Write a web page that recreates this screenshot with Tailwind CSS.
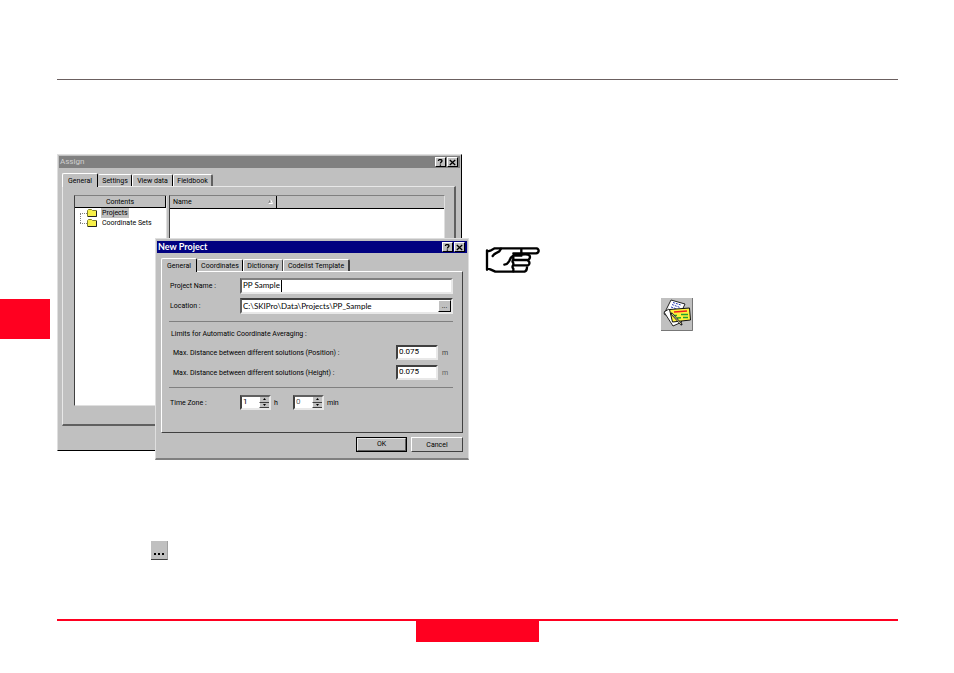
<!DOCTYPE html>
<html lang="en">
<head>
    <meta charset="UTF-8">
    <meta name="viewport" content="width=device-width, initial-scale=1.0">
    <title>New Project</title>
    <script src="https://cdn.jsdelivr.net/npm/@tailwindcss/browser@4"></script>
</head>
<body class="bg-white text-black font-['Roboto','Liberation_Sans',sans-serif] text-[7px] leading-[10px]">
    <div class="flex flex-col min-h-screen">
        <header class="h-20 ml-[57px] mr-14 border-b border-[#6b6060]"></header>

        <main class="flex flex-1 items-start">
            <!-- Chapter tab -->
            <div class="w-[50px] h-10 mt-[219px] mr-[7px] bg-[#ff0020] shrink-0"></div>

            <!-- Left column -->
            <div class="w-[412px] shrink-0 pt-[74px]">
                <div class="relative h-[306px]">

                    <!-- Assign window -->
                    <section class="w-[405px] h-[297px] flex flex-col bg-[#c0c0c0] border border-t-[#dfdfdf] border-l-[#dfdfdf] border-r-black border-b-black p-px">
                        <div class="flex items-center h-3 pl-px pr-0.5 bg-[#808080] text-[#d0d0d0]">
                            <h2 class="flex-1 text-[8px]">Assign</h2>
                            <button aria-label="Help" class="w-[11px] h-[10px] flex items-center justify-center bg-[#c0c0c0] border border-t-white border-l-white border-r-black border-b-black">
                                <svg class="w-[7px] h-[7px]" viewBox="0 0 7 7" fill="none" stroke="#000"><path d="M1.5 2V1.5C1.5 .2 5 .2 5 1.7 5 3 3.4 3 3.4 4.6M3.4 5.6V6.8" stroke-width="1.3"/></svg>
                            </button>
                            <button aria-label="Close" class="w-[11px] h-[10px] ml-px flex items-center justify-center bg-[#c0c0c0] border border-t-white border-l-white border-r-black border-b-black">
                                <svg class="w-[7px] h-[7px]" viewBox="0 0 7 7" fill="none" stroke="#000"><path d="M.8 1l5.4 5M6.2 1L.8 6" stroke-width="1.3"/></svg>
                            </button>
                        </div>

                        <div class="flex items-end h-[18px] pl-[3px] whitespace-nowrap">
                            <button class="relative h-[14px] w-9 -mb-px bg-[#c0c0c0] border border-b-0 border-t-white border-l-white border-r-black rounded-t-xs z-10">General</button>
                            <button class="h-3 w-[34px] border border-b-0 border-t-white border-l-[#c0c0c0] border-r-black rounded-t-xs">Settings</button>
                            <button class="h-3 w-[41px] border border-b-0 border-t-white border-l-white border-r-black rounded-t-xs">View data</button>
                            <button class="h-3 w-10 border border-b-0 border-t-white border-l-white border-r-2 border-r-[#606060] rounded-t-xs">Fieldbook</button>
                        </div>

                        <div class="flex gap-0.5 h-[240px] ml-[3px] mr-1 pl-[11px] pr-[9px] pt-2 pb-[18px] border border-t-[#e8e8e8] border-l-[#e8e8e8] border-r-2 border-r-[#606060] border-b-2 border-b-[#606060]">
                            <div class="w-[93px] bg-white border border-t-[#808080] border-l-[#404040] border-r-[#dfdfdf] border-b-[#dfdfdf]">
                                <div class="h-3 bg-[#c0c0c0] border-b border-r border-black text-center leading-[12px]">Contents</div>
                                <ul class="relative">
                                    <li class="flex items-center h-[10px] ml-[5px]">
                                        <span class="w-[7px] h-px border-t border-dotted border-[#808080]"></span>
                                        <svg class="w-[10px] h-2" viewBox="0 0 10 8"><path d="M.5 7.5v-6l1-1h3l1 1h4v6z" fill="#f7f04a" stroke="#80802a"/><path d="M1 7.5h8.500V2" fill="none" stroke="#222"/></svg>
                                        <span class="ml-1 px-px bg-[#c0c0c0]">Projects</span>
                                    </li>
                                    <li class="flex items-center h-[10px] ml-[5px]">
                                        <span class="w-[7px] h-px border-t border-dotted border-[#808080]"></span>
                                        <svg class="w-[10px] h-2" viewBox="0 0 10 8"><path d="M.5 7.5v-6l1-1h3l1 1h4v6z" fill="#f7f04a" stroke="#80802a"/><path d="M1 7.5h8.500V2" fill="none" stroke="#222"/></svg>
                                        <span class="ml-1 px-px">Coordinate Sets</span>
                                    </li>
                                    <li class="absolute left-[5px] top-[5px] h-[10px] border-l border-dotted border-[#808080]" aria-hidden="true"></li>
                                </ul>
                            </div>
                            <div class="flex-1 bg-white border border-t-[#808080] border-l-[#404040] border-r-[#dfdfdf] border-b-[#dfdfdf]">
                                <table class="w-full border-collapse">
                                    <thead>
                                        <tr class="h-3 bg-[#c0c0c0]">
                                            <th class="w-[106px] p-0 pl-[3px] pr-[3px] font-normal text-left border-r border-b border-black">
                                                <span class="flex items-center justify-between h-[10px]">Name
                                                    <svg class="w-[5px] h-[5px]" viewBox="0 0 5 5" fill="none"><path d="M.5 4.5l2-4" stroke="#808080"/><path d="M2.5.5l2 4h-4" stroke="#fff"/></svg>
                                                </span>
                                            </th>
                                            <th class="p-0 border-b border-black"></th>
                                        </tr>
                                    </thead>
                                </table>
                            </div>
                        </div>
                    </section>

                    <!-- New Project dialog -->
                    <section role="dialog" aria-labelledby="dialogTitle" class="absolute left-[98px] top-[84px] w-[314px] h-[222px] flex flex-col bg-[#c0c0c0] border border-t-[#dfdfdf] border-l-[#dfdfdf] border-r-[#dfdfdf] border-b-2 border-b-[#808080] px-px pt-0.5">
                        <div class="flex items-center h-3 pl-px pr-0.5 bg-[#000080] text-white">
                            <h2 id="dialogTitle" class="flex-1 font-bold text-[9px] font-['Lato','Liberation_Sans',sans-serif]">New Project</h2>
                            <button aria-label="Help" class="w-[11px] h-[10px] flex items-center justify-center bg-[#c0c0c0] border border-t-white border-l-white border-r-black border-b-black">
                                <svg class="w-[7px] h-[7px]" viewBox="0 0 7 7" fill="none" stroke="#000"><path d="M1.5 2V1.5C1.5 .2 5 .2 5 1.7 5 3 3.4 3 3.4 4.6M3.4 5.6V6.8" stroke-width="1.3"/></svg>
                            </button>
                            <button aria-label="Close" class="w-[11px] h-[10px] ml-px flex items-center justify-center bg-[#c0c0c0] border border-t-white border-l-white border-r-black border-b-black">
                                <svg class="w-[7px] h-[7px]" viewBox="0 0 7 7" fill="none" stroke="#000"><path d="M.8 1l5.4 5M6.2 1L.8 6" stroke-width="1.3"/></svg>
                            </button>
                        </div>

                        <div class="flex items-end h-[18px] pl-1 whitespace-nowrap">
                            <button class="relative h-[14px] w-9 -mb-px bg-[#c0c0c0] border border-b-0 border-t-white border-l-white border-r-black rounded-t-xs z-10">General</button>
                            <button class="h-3 w-[46px] border border-b-0 border-t-white border-l-[#c0c0c0] border-r-black rounded-t-xs">Coordinates</button>
                            <button class="h-3 w-10 border border-b-0 border-t-white border-l-white border-r-[#404040] rounded-t-xs">Dictionary</button>
                            <button class="h-3 w-[67px] border border-b-0 border-t-white border-l-white border-r-2 border-r-[#404040] rounded-t-xs">Codelist Template</button>
                        </div>

                        <form id="projectForm" class="h-[162px] ml-1 mr-1 px-[7px] pt-1.5 border border-t-white border-l-white border-r-[#404040] border-b-[#404040]">
                            <div class="flex items-center h-4">
                                <label for="projectName" class="w-[71px] pl-px">Project Name :</label>
                                <div class="flex flex-1 mr-0.5 h-4 bg-white border-2 border-t-[#808080] border-l-[#606060] border-r-[#e8e8e8] border-b-[#e8e8e8]">
                                    <input id="projectName" type="text" value="PP Sample" class="w-10 pl-px pb-0.5 border-r border-black text-[8px] font-['Lato','Liberation_Sans',sans-serif] outline-none">
                                </div>
                            </div>
                            <div class="flex items-center h-4 mt-1">
                                <label for="location" class="w-[71px] pl-px">Location :</label>
                                <div class="flex flex-1 mr-0.5 h-4 bg-white border-2 border-t-[#404040] border-l-[#606060] border-r-[#e8e8e8] border-b-[#e8e8e8]">
                                    <input id="location" type="text" value="C:\SKIPro\Data\Projects\PP_Sample" class="flex-1 min-w-0 px-px text-[8px] font-['Lato','Liberation_Sans',sans-serif] outline-none">
                                    <button type="button" aria-label="Browse" class="w-[13px] bg-[#c0c0c0] border border-t-white border-l-white border-r-black border-b-black leading-[6px]">...</button>
                                </div>
                            </div>

                            <hr class="h-0.5 mt-[7px] mr-0.5 border-0 border-t border-[#808080]">
                            <p class="mt-1.5 ml-0.5">Limits for Automatic Coordinate Averaging :</p>
                            <div class="flex items-center h-[15px] mt-1.5 ml-1">
                                <label for="maxPosition" class="w-[223px]">Max. Distance between different solutions (Position) :</label>
                                <input id="maxPosition" type="text" value="0.075" class="w-[42px] h-[15px] px-px pb-0.5 bg-white border-2 border-t-[#404040] border-l-[#404040] border-r-[#e8e8e8] border-b-[#e8e8e8] text-[8px] outline-none">
                                <span class="ml-1 text-[#404040]">m</span>
                            </div>
                            <div class="flex items-center h-[15px] mt-[5px] ml-1">
                                <label for="maxHeight" class="w-[223px]">Max. Distance between different solutions (Height) :</label>
                                <input id="maxHeight" type="text" value="0.075" class="w-[42px] h-[15px] px-px pb-0.5 bg-white border-2 border-t-[#404040] border-l-[#404040] border-r-[#e8e8e8] border-b-[#e8e8e8] text-[8px] outline-none">
                                <span class="ml-1 text-[#606060]">m</span>
                            </div>

                            <hr class="h-0.5 mt-[7px] mr-0.5 border-0 border-t border-[#808080]">
                            <div class="flex items-center h-[15px] mt-1.5">
                                <label for="zoneHours" class="w-[71px] pl-px">Time Zone :</label>
                                <div class="flex w-[31px] h-[15px] bg-white border-2 border-t-[#606060] border-l-[#404040] border-r-[#e8e8e8] border-b-[#e8e8e8]">
                                    <input id="zoneHours" type="text" value="1" class="flex-1 min-w-0 pl-px pb-0.5 text-[8px] outline-none">
                                    <span class="flex flex-col w-[10px]">
                                        <button type="button" aria-label="More hours" class="flex-1 flex items-center justify-center bg-[#c0c0c0] border-l border-l-white border-b border-b-[#404040]"><svg class="w-[3px] h-0.5" viewBox="0 0 3 2"><path d="M0 2h3L1.5 0z"/></svg></button>
                                        <button type="button" aria-label="Fewer hours" class="flex-1 flex items-center justify-center bg-[#c0c0c0] border-l border-l-white border-b border-b-[#404040]"><svg class="w-[3px] h-0.5" viewBox="0 0 3 2"><path d="M0 0h3L1.5 2z"/></svg></button>
                                    </span>
                                </div>
                                <label for="zoneHours" class="w-[22px] pl-[3px]">h</label>
                                <div class="flex w-[31px] h-[15px] bg-white border-2 border-t-[#606060] border-l-[#404040] border-r-[#e8e8e8] border-b-[#e8e8e8]">
                                    <input id="zoneMinutes" type="text" value="0" class="flex-1 min-w-0 pl-px pb-0.5 text-[8px] text-[#606060] outline-none">
                                    <span class="flex flex-col w-[10px]">
                                        <button type="button" aria-label="More minutes" class="flex-1 flex items-center justify-center bg-[#c0c0c0] border-l border-l-white border-b border-b-[#404040]"><svg class="w-[3px] h-0.5" viewBox="0 0 3 2"><path d="M0 2h3L1.5 0z"/></svg></button>
                                        <button type="button" aria-label="Fewer minutes" class="flex-1 flex items-center justify-center bg-[#c0c0c0] border-l border-l-white border-b border-b-[#404040]"><svg class="w-[3px] h-0.5" viewBox="0 0 3 2"><path d="M0 0h3L1.5 2z"/></svg></button>
                                    </span>
                                </div>
                                <label for="zoneMinutes" class="pl-[3px]">min</label>
                            </div>
                        </form>

                        <div class="flex justify-end gap-1 mt-1 mr-1">
                            <button type="submit" form="projectForm" class="w-[51px] h-[15px] border border-black"><span class="block h-full border border-t-[#e8e8e8] border-l-[#e8e8e8] border-r-[#606060] border-b-[#606060] leading-[11px]">OK</span></button>
                            <button type="button" class="w-[52px] h-[15px] border border-t-white border-l-white border-r-[#404040] border-b-[#404040]">Cancel</button>
                        </div>
                    </section>
                </div>

                <!-- Browse button on its own -->
                <button aria-label="Browse" class="flex items-center justify-center gap-[2px] w-[17px] h-[19px] mt-[81px] ml-[94px] pt-2 bg-[#c0c0c0] border-r border-r-[#a0a0a0] border-b border-b-[#404040]">
                    <span class="size-0.5 bg-black"></span>
                    <span class="size-0.5 bg-black"></span>
                    <span class="size-0.5 bg-black"></span>
                </button>
            </div>

            <!-- Right column -->
            <div class="flex flex-1 items-start pl-[9px]">
                <svg class="w-[70px] h-[50px] mt-[155px] shrink-0" viewBox="0 0 210 150" fill="none" stroke="#000" stroke-width="7" stroke-linejoin="round" stroke-linecap="round" aria-label="Pointing hand">
                    <path d="M27 46V104M27 50L37 47 50 40H176Q182 42 182 48 181 54 174 55H130M27 100L37 103 52 110H140Q147 108 147 97"/>
                    <path d="M44 63Q50 55 64 49L69 41M79 89Q88 88 94 78 98 66 106 62H130M130 43V55H106M131 59Q151 57 155 62 158 70 151 75H106M106 67V74Q101 79 106 84V90Q101 96 106 101V109M151 78Q158 83 151 91H106"/>
                </svg>
                <svg class="w-8 h-[33px] ml-[113px] mt-[218px] shrink-0" viewBox="0 0 32 33" aria-label="Project management">
                    <path d="M0 0h32v33H0z" fill="#c0c0c0"/>
                    <path d="M31.5 0v32.500H0" fill="none" stroke="#777"/>
                    <path d="M10 2l14 4-8 17-13-7z" fill="#fff" stroke="#222"/>
                    <path d="M12 4.500l8 2.500M11 6.500l8 3M10 9l6 2" stroke="#2838b0" stroke-dasharray="2 1"/>
                    <path d="M3 14l5-3 13 13-9 4z" fill="#fff" stroke="#222"/>
                    <path d="M8.500 11.500l20-1.500 1 12-18 2z" fill="#fff23a" stroke="#111"/>
                    <path d="M13 14l13-1" stroke="#f02020" stroke-width="1.500"/>
                    <path d="M12 17.500h4M20 16.500h7M16 20l4-.3M22 19.500h5" stroke="#20a030" stroke-width="1.500"/>
                    <path d="M10 15l11 12" stroke="#222" stroke-width="2"/>
                    <path d="M11 16l9 10" stroke="#d0c890"/>
                </svg>
            </div>
        </main>

        <footer class="h-[54px] ml-[57px] mr-14 border-t-2 border-[#ff0020]">
            <div class="w-[123px] h-[21px] mx-auto bg-[#ff0020]"></div>
        </footer>
    </div>
</body>
</html>
